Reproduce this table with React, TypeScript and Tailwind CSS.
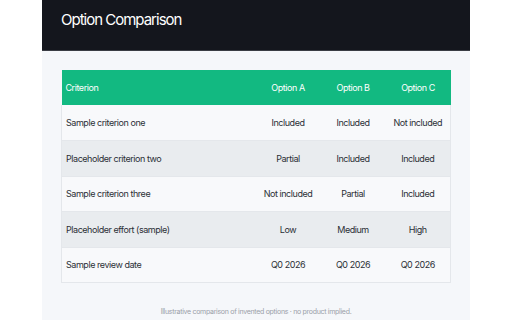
import React from "react";

const rows = [
  ["Sample criterion one", "Included", "Included", "Not included"],
  ["Placeholder criterion two", "Partial", "Included", "Included"],
  ["Sample criterion three", "Not included", "Partial", "Included"],
  ["Placeholder effort (sample)", "Low", "Medium", "High"],
  ["Sample review date", "Q0 2026", "Q0 2026", "Q0 2026"],
];

export default function App() {
  return (
    <div className="min-h-screen bg-white" style={{ fontFamily: "Inter, 'Liberation Sans', sans-serif" }}>
      <div className="mx-auto w-[428px] bg-[#f5f7fa] min-h-[320px]">
        {/* Header */}
        <header className="h-[51px] bg-[#14161d] px-[19px] pt-[9px] border-b border-[#3a3d44]">
          <h1 className="text-[15px] font-normal text-white tracking-[-1px]">Option Comparison</h1>
        </header>

        <main className="px-[19px] pt-[19px]">
          <table className="w-[389px] table-fixed border-collapse text-[9px] tracking-[-0.45px] text-[#2b2f36]">
            <colgroup>
              <col className="w-[194px]" />
              <col className="w-[65px]" />
              <col className="w-[65px]" />
              <col className="w-[65px]" />
            </colgroup>
            <thead>
              <tr className="h-[35px] bg-[#12b981] text-white">
                <th className="pl-[4px] text-left font-normal">Criterion</th>
                <th className="text-center font-normal">Option A</th>
                <th className="text-center font-normal">Option B</th>
                <th className="text-center font-normal">Option C</th>
              </tr>
            </thead>
            <tbody className="border-x border-b border-[#e4e7eb]">
              {rows.map((r, i) => (
                <tr
                  key={i}
                  className={`h-[35.5px] border-b border-[#e4e7eb] ${i % 2 === 1 ? "bg-[#e9ecef]" : "bg-[#f8f9fb]"}`}
                >
                  <td className="pl-[4px] text-left">{r[0]}</td>
                  <td className="text-center">{r[1]}</td>
                  <td className="text-center">{r[2]}</td>
                  <td className="text-center">{r[3]}</td>
                </tr>
              ))}
            </tbody>
          </table>

          <p className="mt-[24px] text-center text-[7px] tracking-[-0.3px] text-[#9aa0a8]">
            Illustrative comparison of invented options · no product implied.
          </p>
        </main>
      </div>
    </div>
  );
}
